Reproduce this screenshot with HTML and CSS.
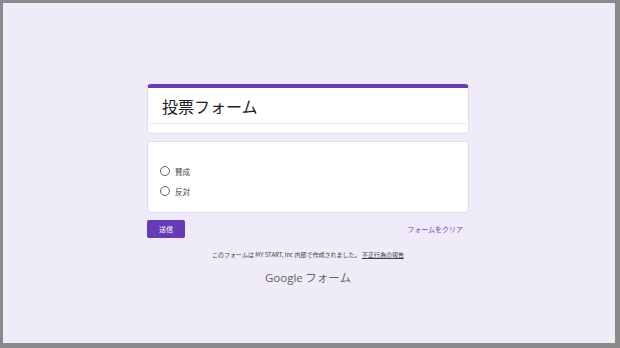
FILE: index.html
```html
<!DOCTYPE html>
<html lang="ja">
<head>
    <meta charset="UTF-8">
    <meta name="viewport" content="width=device-width, initial-scale=1.0">
    <title>投票フォーム</title>
    <link rel="stylesheet" href="styles.css">
</head>
<body>
    <div class="frame">
        <div class="form">
            <div class="card head">
                <h1 class="title">投票フォーム</h1>
                <div class="rule"></div>
            </div>
            <div class="card question">
                <label class="option"><span class="radio"></span><span>賛成</span></label>
                <label class="option"><span class="radio"></span><span>反対</span></label>
            </div>
            <div class="actions">
                <button class="send">送信</button>
                <a class="clear">フォームをクリア</a>
            </div>
        </div>
        <p class="note">このフォームは MY START, Inc 内部で作成されました。 <a class="report">不正行為の報告</a></p>
        <p class="brand"><span class="google">Google</span> フォーム</p>
    </div>
</body>
</html>
```

FILE: styles.css
```css
* {
    box-sizing: border-box;
}
body {
    margin: 0;
    font-family: "Noto Sans CJK JP", "Noto Sans", sans-serif;
    color: #202124;
}
.frame {
    width: 620px;
    height: 348px;
    background: #f0ebf8;
    border-style: solid;
    border-color: #8a8a8a;
    border-width: 3px 5px 5px 3px;
    padding: 81px 2px 0 0;
    display: flex;
    flex-direction: column;
    align-items: center;
}
.form {
    width: 322px;
}
.card {
    background: #fff;
    border: 1px solid #e2dcec;
    border-radius: 4px;
}
.head {
    border-top: 4px solid #673ab7;
    padding: 6px 0 9px 0;
}
.title {
    margin: 0;
    padding: 0 14px 5px;
    font-size: 16px;
    font-weight: 400;
    line-height: 24px;
}
.rule {
    height: 1px;
    background: #e8e6ec;
    margin: 0 1px;
}
.question {
    margin-top: 7px;
    padding: 19px 12px 11px;
    height: 72px;
}
.option {
    display: flex;
    align-items: center;
    gap: 5px;
    height: 20px;
    font-size: 7.5px;
    color: #3c4043;
}
.radio {
    width: 10px;
    height: 10px;
    border: 1.3px solid #5f6368;
    border-radius: 50%;
}
.actions {
    margin-top: 7px;
    display: flex;
    justify-content: space-between;
    align-items: center;
}
.send {
    width: 38px;
    height: 18px;
    padding: 0;
    border: none;
    border-radius: 2px;
    background: #673ab7;
    color: #fff;
    font-family: inherit;
    font-size: 7px;
}
.clear {
    color: #7248b9;
    font-size: 7px;
    padding-right: 6px;
}
.note {
    margin: 13px 0 0;
    font-size: 6px;
    line-height: 8px;
    color: #3c4043;
}
.report {
    text-decoration: underline;
}
.brand {
    margin: 11px 0 0;
    font-size: 11.5px;
    line-height: 14px;
    color: #5f6368;
}
.google {
    font-family: "Open Sans", sans-serif;
}
```
